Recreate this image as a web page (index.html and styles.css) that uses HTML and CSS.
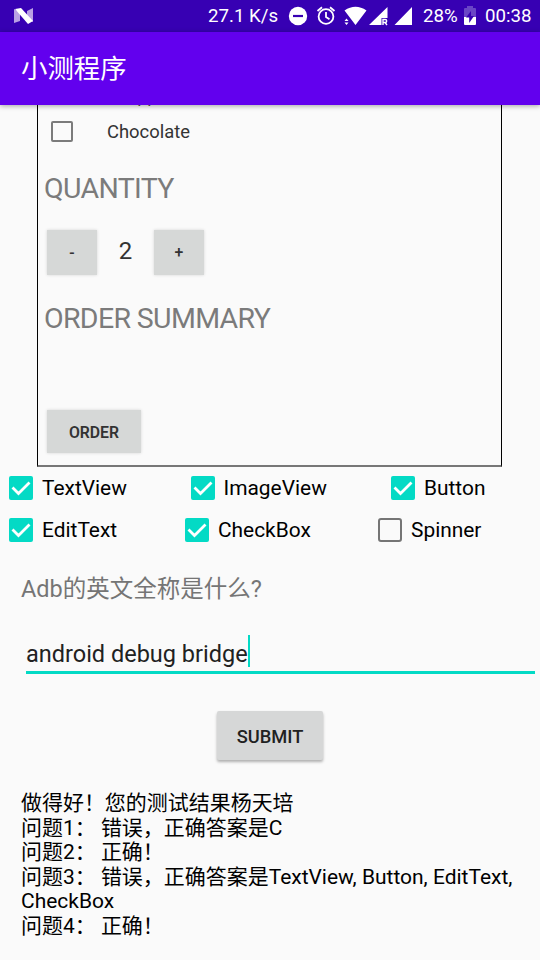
FILE: index.html
```html
<!DOCTYPE html>
<html lang="zh-CN">
<head>
<meta charset="utf-8">
<title>小测程序</title>
<link rel="stylesheet" href="styles.css">
</head>
<body>
<header class="status">
  <svg class="logo" width="20" height="16" viewBox="0 0 20 16"><path fill="#b9a0e4" d="M0 1l6 3v9l-6 2zM13 3l6-3v14l-6-3z"/><path fill="#fff" d="M1 1l6-1 12 13-5 3z"/></svg>
  <span class="speed">27.1 K/s</span>
  <svg class="status-icons" width="130" height="24" viewBox="284 4 130 24">
    <circle cx="298" cy="16" r="9.2" fill="#fff"/><path d="M293 16h10" stroke="#3700b3" stroke-width="2.2"/>
    <g fill="none" stroke="#fff" stroke-width="1.8"><circle cx="326" cy="16.5" r="7.4"/><path d="M326 12v5l3.5 2.3M317.5 11l4.500-3.800M334.500 11l-4.500-3.800"/></g>
    <path fill="#fff" d="M344.500 10.500Q355.500 3 366.500 10.500L355.500 25zM369 25L387.500 7v11h-6v7zM394.500 25L412 7v18z"/>
    <path fill="#fff" d="M344.500 21l2-2.500 2 2.500zM344.500 22.500h4l-2 2.500z"/>
    <path fill="none" stroke="#fff" stroke-width="1.4" d="M383 25v-5.500h2.200a1.500 1.500 0 0 1 0 3H383M385 22.500l2 2.500"/>
  </svg>
  <span class="percent">28%</span>
  <svg class="battery" width="12" height="20" viewBox="0 0 12 20"><path fill="#6a45c6" d="M0 3q0-1 1-1h2V0h6v2h2q1 0 1 1v8H0z"/><path fill="#fff" d="M0 11h12v7q0 1-1 1H1q-1 0-1-1z"/><path fill="#3700b3" d="M7 5l-5 6.500h3.200V17l4.800-7H7z"/></svg>
  <span class="clock">00:38</span>
</header>
<header class="appbar"><h1>小测程序</h1></header>
<main>
  <section class="preview">
    <div class="clipped"><span>Whipped cream</span></div>
    <div class="topping"><i class="box"></i><span>Chocolate</span></div>
    <h2 class="quantity-title">QUANTITY</h2>
    <div class="stepper"><span class="btn">-</span><span class="count">2</span><span class="btn">+</span></div>
    <h2 class="summary-title">ORDER SUMMARY</h2>
    <div class="btn order">ORDER</div>
  </section>
  <section class="checks">
    <div class="row row-a">
      <label><svg class="tick" viewBox="0 0 24 24"><rect width="24" height="24" rx="2"/><path d="M3.500 11.500l6 6L20.500 6.500"/></svg>TextView</label>
      <label><svg class="tick" viewBox="0 0 24 24"><rect width="24" height="24" rx="2"/><path d="M3.500 11.500l6 6L20.500 6.500"/></svg>ImageView</label>
      <label><svg class="tick" viewBox="0 0 24 24"><rect width="24" height="24" rx="2"/><path d="M3.500 11.500l6 6L20.500 6.500"/></svg>Button</label>
    </div>
    <div class="row row-b">
      <label><svg class="tick" viewBox="0 0 24 24"><rect width="24" height="24" rx="2"/><path d="M3.500 11.500l6 6L20.500 6.500"/></svg>EditText</label>
      <label><svg class="tick" viewBox="0 0 24 24"><rect width="24" height="24" rx="2"/><path d="M3.500 11.500l6 6L20.500 6.500"/></svg>CheckBox</label>
      <label><i class="empty"></i>Spinner</label>
    </div>
  </section>
  <p class="question">Adb的英文全称是什么?</p>
  <div class="field"><span>android debug bridge</span><i class="caret"></i></div>
  <button class="submit">SUBMIT</button>
  <div class="result">
    <p>做得好！您的测试结果杨天培</p>
    <p>问题1： 错误，正确答案是C</p>
    <p>问题2： 正确！</p>
    <p>问题3： 错误，正确答案是TextView, Button, EditText,<br>CheckBox</p>
    <p>问题4： 正确！</p>
  </div>
</main>
</body>
</html>
```
FILE: styles.css
```css
* { box-sizing: border-box; }
body {
  margin: 0;
  width: 540px;
  height: 960px;
  overflow: hidden;
  background: #fafafa;
  color: #000;
  font-family: Roboto, "Noto Sans CJK SC", sans-serif;
}
h1, h2, p { margin: 0; font-weight: 400; }
svg { display: block; flex: none; }
.status {
  display: flex;
  align-items: center;
  height: 32px;
  padding-left: 14px;
  background: #3700b3;
  color: #fff;
  font-size: 18.700px;
  white-space: nowrap;
}
.speed { width: 76px; margin-left: 174px; }
.percent { width: 41px; margin-left: 9px; }
.clock { margin-left: 9px; }
.appbar {
  position: relative;
  display: flex;
  align-items: center;
  height: 73px;
  padding-left: 21px;
  background: #6200ee;
  color: #fff;
  box-shadow: 0 1px 5px rgba(0, 0, 0, .35);
}
h1 { font-size: 26.400px; line-height: 40px; }
.preview {
  width: 465px;
  height: 362px;
  margin-left: 37px;
  border: 1px solid #000;
  border-top: 0;
  border-bottom: 2px solid #777;
  color: #333;
  overflow: hidden;
}
.clipped { display: flex; align-items: flex-end; height: 2px; padding-left: 69px; font-size: 18px; line-height: 22px; color: #555; }
.topping { display: flex; align-items: center; height: 49px; padding-left: 13px; font-size: 18.400px; }
.topping .box { width: 22px; height: 21px; margin-right: 34px; border: 2px solid #7b7b7b; border-radius: 2px; }
h2 { padding-left: 6px; color: #7b7b7b; font-size: 28.500px; line-height: 34px; letter-spacing: -.65px; }
.quantity-title { margin-top: 16px; }
.stepper { display: flex; margin: 24px 0 0 9px; }
.btn {
  display: flex;
  align-items: center;
  justify-content: center;
  width: 50px;
  height: 45px;
  background: #d6d8d7;
  box-shadow: 0 0 3px rgba(0, 0, 0, .15);
  color: #333;
  font-size: 15.800px;
  font-weight: 500;
}
.count { width: 57px; text-align: center; font-size: 24px; line-height: 42px; }
.summary-title { margin-top: 27px; }
.order { width: 94px; height: 43px; margin: 74px 0 0 9px; padding-top: 1px; font-weight: 600; }
.row { display: grid; align-items: center; height: 42px; padding-left: 9px; font-size: 20.900px; }
.row-a { grid-template-columns: 181.500px 200.500px 1fr; }
.row-b { grid-template-columns: 176px 193px 1fr; }
.row label { display: flex; align-items: center; }
.tick { width: 24px; height: 24px; margin-right: 9px; }
.tick rect { fill: #03dac5; }
.tick path { fill: none; stroke: #fff; stroke-width: 2.800; }
.empty { width: 24px; height: 24px; margin-right: 9px; border: 2px solid #757575; border-radius: 3px; }
.question { margin: 22px 0 0 21px; color: #757575; font-size: 23.500px; line-height: 32px; }
.field {
  display: flex;
  align-items: center;
  height: 40px;
  margin: 29px 5px 0 26px;
  border-bottom: 3px solid #03dac5;
  color: #212121;
  font-size: 23.500px;
}
.field span { padding-top: 3px; }
.caret { width: 2px; height: 32px; margin-bottom: 3px; background: #03dac5; }
.submit {
  display: block;
  width: 106px;
  height: 49px;
  margin: 37px 0 0 217px;
  padding: 1px 0 0;
  border: 0;
  border-radius: 2px;
  background: #d6d7d7;
  box-shadow: 0 2px 3px rgba(0, 0, 0, .3);
  color: #212121;
  font: 500 18.300px Roboto, sans-serif;
}
.result { margin: 31px 0 0 21px; font-size: 20.970px; line-height: 24.500px; white-space: nowrap; }
```
